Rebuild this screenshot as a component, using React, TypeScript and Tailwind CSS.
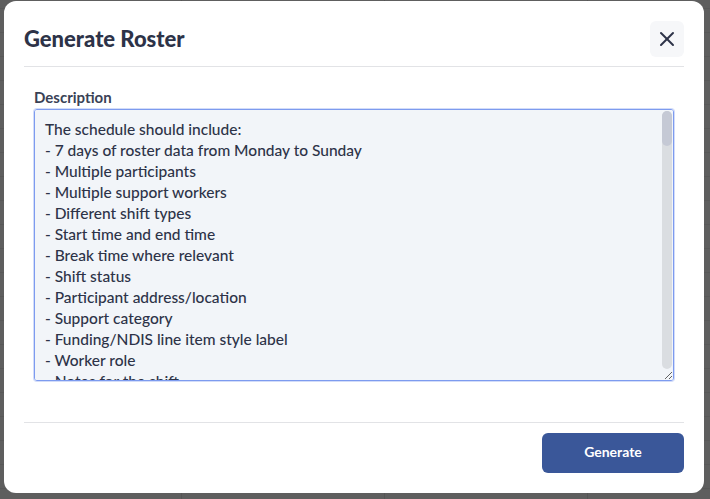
import { X } from "lucide-react";

const description = `The schedule should include:
- 7 days of roster data from Monday to Sunday
- Multiple participants
- Multiple support workers
- Different shift types
- Start time and end time
- Break time where relevant
- Shift status
- Participant address/location
- Support category
- Funding/NDIS line item style label
- Worker role
- Notes for the shift
- Realistic Australian names and suburbs
- Mix of morning, afternoon and overnight shifts`;

export default function App() {
	return (
		<div className="h-[499px] w-[710px] overflow-hidden bg-[#5e5e5e] bg-[linear-gradient(to_right,#555_1px,transparent_1px),linear-gradient(to_bottom,#585858_1px,transparent_1px)] bg-[size:203px_24px] bg-[position:-22px_8px] pl-[4px] pt-[1px] font-['Lato',sans-serif]">
			{/* Modal */}
			<div className="flex h-[492px] w-[700px] flex-col rounded-[12px] bg-white">
				{/* Header */}
				<div className="mx-[20px] flex items-center justify-between border-b border-[#e2e3e6] pb-[9px] pt-[20px]">
					<h2 className="text-[22px] font-black leading-[28px] text-[#2d3348]">Generate Roster</h2>
					<button className="flex h-[36px] w-[34px] items-center justify-center rounded-[6px] bg-[#f6f7f9] text-[#2d3348]">
						<X size={24} strokeWidth={2} />
					</button>
				</div>

				{/* Body */}
				<div className="flex flex-1 flex-col px-[30px] pt-[21px]">
					<label htmlFor="description" className="mb-[3px] text-[15px] font-bold leading-[18px] text-[#3a4256]">
						Description
					</label>
					<div className="relative h-[272px] w-full">
						<textarea
							id="description"
							defaultValue={description}
							className="h-full w-full resize-y rounded-[3px] border border-[#7d9bef] bg-[#f2f5f9] py-[9px] pl-[10px] pr-[20px] text-[15.5px] font-medium leading-[21px] text-[#2d3348] shadow-[0_0_0_1px_rgba(125,155,239,0.35)] outline-none [scrollbar-width:none]"
						/>
						{/* scrollbar */}
						<div className="pointer-events-none absolute bottom-[12px] right-[2px] top-[2px] w-[10px] rounded-full bg-[#dadde1]">
							<div className="h-[35px] w-full rounded-full bg-[#c5c9d5]" />
						</div>
					</div>
				</div>

				{/* Footer */}
				<div className="mx-[20px] flex justify-end border-t border-[#e2e3e6] pb-[20px] pt-[10px]">
					<button className="h-[40px] w-[142px] rounded-[6px] bg-[#3a5799] pb-[3px] text-[14px] font-bold text-white">
						Generate
					</button>
				</div>
			</div>
		</div>
	);
}
